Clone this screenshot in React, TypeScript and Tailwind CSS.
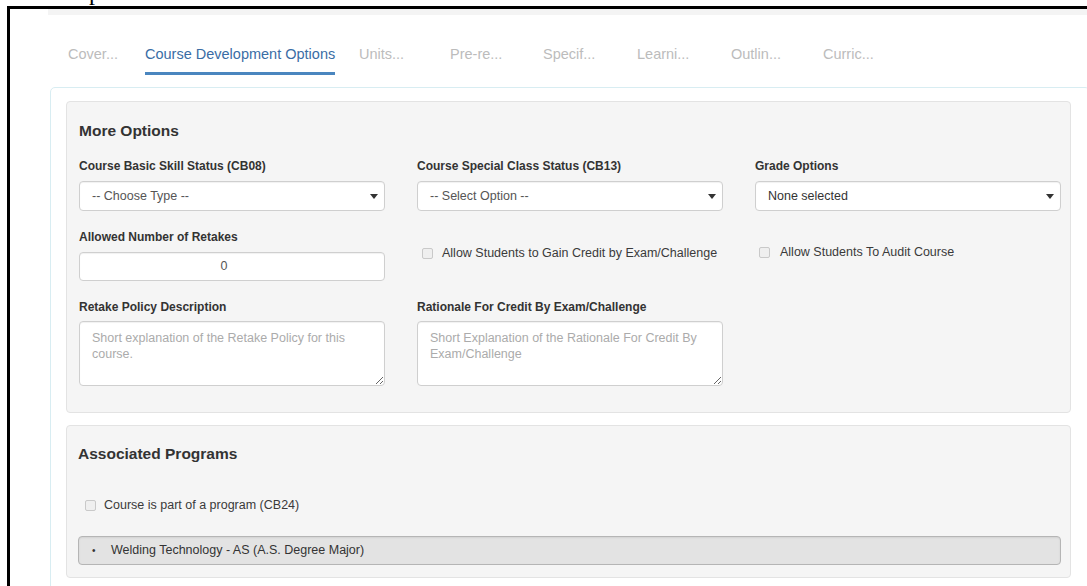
import React from 'react';

const tabs = [
  { label: 'Cover...', width: 'w-[77px]' },
  { label: 'Course Development Options', width: 'w-[214px]', active: true },
  { label: 'Units...', width: 'w-[91px]' },
  { label: 'Pre-re...', width: 'w-[93px]' },
  { label: 'Specif...', width: 'w-[94px]' },
  { label: 'Learni...', width: 'w-[94px]' },
  { label: 'Outlin...', width: 'w-[92px]' },
  { label: 'Curric...', width: 'w-[92px]' },
];

const Caret = () => (
  <svg width="8" height="5" viewBox="0 0 8 5" className="shrink-0">
    <path d="M0 0h8L4 5z" fill="#333" />
  </svg>
);

const Label: React.FC<{ children: React.ReactNode; className?: string }> = ({ children, className = '' }) => (
  <div className={`text-[12px] font-bold leading-[16px] text-[#333] ${className}`}>{children}</div>
);

const SelectBox: React.FC<{ value: string; dark?: boolean }> = ({ value, dark }) => (
  <div className="flex h-[30px] items-center justify-between rounded-[4px] border border-[#cfcfcf] bg-white pl-[12px] pr-[6px] shadow-[inset_0_1px_1px_rgba(0,0,0,0.06)]">
    <span className={`text-[12.5px] ${dark ? 'text-[#333]' : 'text-[#555]'}`}>{value}</span>
    <Caret />
  </div>
);

const Checkbox: React.FC<{ label: string; className?: string; gap?: string }> = ({ label, className = '', gap = 'gap-[9px]' }) => (
  <label className={`flex items-center ${gap} text-[12.5px] leading-[16px] text-[#3a3a3a] ${className}`}>
    <span className="inline-block h-[11px] w-[11px] rounded-[2px] border border-[#c9c9c9] bg-[#efefef]" />
    {label}
  </label>
);

const TextArea: React.FC<{ placeholder: string }> = ({ placeholder }) => (
  <textarea
    readOnly
    placeholder={placeholder}
    className="block h-[65px] w-full rounded-[4px] border border-[#cfcfcf] bg-white px-[12px] pt-[8px] text-[12.5px] leading-[16px] text-[#333] shadow-[inset_0_1px_1px_rgba(0,0,0,0.06)] outline-none placeholder:text-[#ababab]"
  />
);

export default function App() {
  return (
    <div className="h-[586px] w-[1087px] overflow-hidden bg-white pl-[7px] font-['Liberation_Sans',Arial,sans-serif]">
      {/* tail of a caption line above the frame */}
      <div className="h-[6px] overflow-hidden">
        <span className="-mt-[20px] ml-[82px] block font-['Liberation_Serif',serif] text-[24px] leading-none text-black">p</span>
      </div>

      <div className="h-[580px] overflow-hidden border-l-[3px] border-t-[3px] border-black">
        <div className="ml-[38px] h-[6px] bg-[#f4f4f4]" />

        {/* section tabs */}
        <nav className="flex pl-[58px] pt-[27px]">
          {tabs.map((t) => (
            <div key={t.label} className={`${t.width} shrink-0`}>
              <span
                className={`inline-block pb-[8px] text-[14.5px] leading-[20px] ${
                  t.active ? 'border-b-[3px] border-[#4a86bf] text-[#3a6da5]' : 'border-b-[3px] border-transparent text-[#bcbcbc]'
                }`}
              >
                {t.label}
              </span>
            </div>
          ))}
        </nav>

        <div className="ml-[40px] mt-[12px] w-[1040px] rounded-[5px] border border-[#d8edf2] px-[15px] pb-[20px] pt-[13px]">
          {/* More Options */}
          <section className="w-[1005px] rounded-[4px] border border-[#e3e3e3] bg-[#f5f5f5] pb-[26px] pl-[12px] pr-[9px] pt-[20px]">
            <h3 className="text-[15.5px] font-bold leading-[18px] text-[#333]">More Options</h3>

            <div className="mt-[18px] grid w-[982px] grid-cols-3 gap-x-[32px] gap-y-[18px]">
              <div>
                <Label className="mb-[7px]">Course Basic Skill Status (CB08)</Label>
                <SelectBox value="-- Choose Type --" />
              </div>
              <div>
                <Label className="mb-[7px]">Course Special Class Status (CB13)</Label>
                <SelectBox value="-- Select Option --" />
              </div>
              <div>
                <Label className="mb-[7px]">Grade Options</Label>
                <SelectBox value="None selected" dark />
              </div>

              <div>
                <Label className="mb-[7px]">Allowed Number of Retakes</Label>
                <div className="flex h-[29px] items-center justify-center rounded-[4px] border border-[#cfcfcf] bg-white pr-[16px] text-[12.5px] text-[#555] shadow-[inset_0_1px_1px_rgba(0,0,0,0.06)]">
                  0
                </div>
              </div>
              <div className="pt-[16px]">
                <Checkbox label="Allow Students to Gain Credit by Exam/Challenge" className="ml-[5px]" />
              </div>
              <div className="pt-[15px]">
                <Checkbox label="Allow Students To Audit Course" className="ml-[4px]" gap="gap-[10px]" />
              </div>

              <div>
                <Label className="mb-[6px]">Retake Policy Description</Label>
                <TextArea placeholder="Short explanation of the Retake Policy for this course." />
              </div>
              <div>
                <Label className="mb-[6px]">Rationale For Credit By Exam/Challenge</Label>
                <TextArea placeholder="Short Explanation of the Rationale For Credit By Exam/Challenge" />
              </div>
              <div />
            </div>
          </section>

          {/* Associated Programs */}
          <section className="mt-[12px] w-[1005px] rounded-[4px] border border-[#e3e3e3] bg-[#f5f5f5] pb-[12px] pl-[11px] pr-[9px] pt-[17px]">
            <h3 className="text-[15.5px] font-bold leading-[22px] text-[#333]">Associated Programs</h3>
            <Checkbox label="Course is part of a program (CB24)" className="ml-[7px] mt-[32px]" gap="gap-[8px]" />
            <div className="mt-[23px] flex h-[29px] w-[983px] items-center rounded-[4px] border border-[#b5b5b5] bg-[#e3e3e3] pl-[13px] text-[12.5px] text-[#333] shadow-[inset_0_1px_2px_rgba(0,0,0,0.08)]">
              <span className="w-[19px] text-[10px]">•</span>
              Welding Technology - AS (A.S. Degree Major)
            </div>
          </section>
        </div>
      </div>
    </div>
  );
}
